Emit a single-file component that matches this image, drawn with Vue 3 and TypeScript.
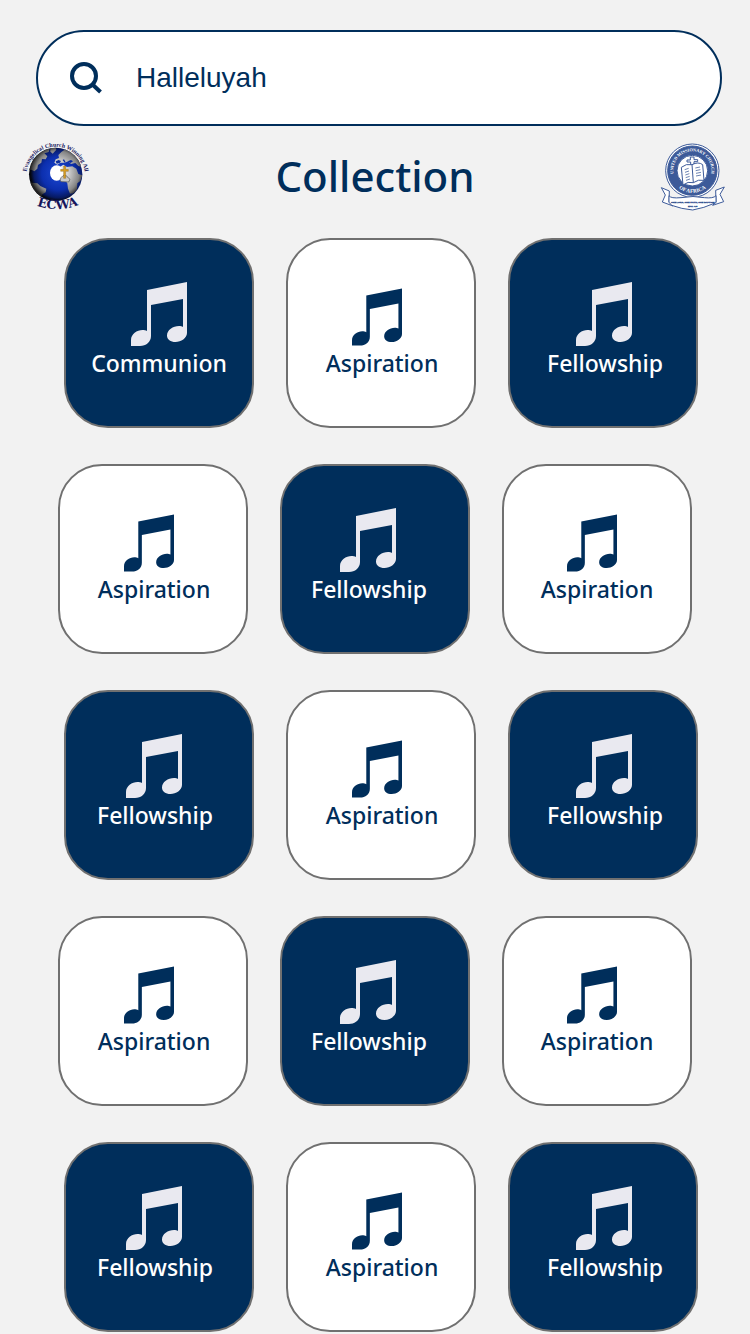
<script setup lang="ts">
import { ref } from 'vue'

interface Tile {
  name: string
  dark: boolean
}

const query = ref('Halleluyah')

const dark = (name: string): Tile => ({ name, dark: true })
const light = (name: string): Tile => ({ name, dark: false })

const rows: Tile[][] = [
  [dark('Communion'), light('Aspiration'), dark('Fellowship')],
  [light('Aspiration'), dark('Fellowship'), light('Aspiration')],
  [dark('Fellowship'), light('Aspiration'), dark('Fellowship')],
  [light('Aspiration'), dark('Fellowship'), light('Aspiration')],
  [dark('Fellowship'), light('Aspiration'), dark('Fellowship')],
]
</script>

<template>
  <main class="page">
    <form class="search" role="search" @submit.prevent>
      <label class="search-label" for="song-search" aria-label="Search">
        <svg class="search-icon" viewBox="0 0 32 32" aria-hidden="true">
          <circle cx="14" cy="14" r="12" fill="none" stroke="currentColor" stroke-width="4" />
          <path d="M22.500 22.500L30.500 30" stroke="currentColor" stroke-width="4" />
        </svg>
      </label>
      <input id="song-search" v-model="query" class="search-input" type="text" />
    </form>

    <header class="header">
      <svg class="logo" viewBox="36 30 204 216" role="img">
        <defs>
          <radialGradient id="sea" cx="0.55" cy="0.48" r="0.52">
            <stop offset="0" stop-color="#1c48d4" />
            <stop offset="0.6" stop-color="#0c2fae" />
            <stop offset="0.88" stop-color="#071a62" />
            <stop offset="1" stop-color="#05070f" />
          </radialGradient>
          <radialGradient id="land" gradientUnits="userSpaceOnUse" cx="142" cy="128" r="82">
            <stop offset="0" stop-color="#ffffff" />
            <stop offset="0.35" stop-color="#dcdcdc" />
            <stop offset="0.8" stop-color="#858585" />
            <stop offset="1" stop-color="#222222" />
          </radialGradient>
          <clipPath id="globe"><circle cx="137" cy="133" r="80" /></clipPath>
          <path id="ecwa-top" d="M49 138A88 88 0 1 1 225 138" />
          <path id="ecwa-base" d="M64 220Q144 256 222 218" />
        </defs>
        <circle cx="137" cy="133" r="80" fill="url(#sea)" />
        <g clip-path="url(#globe)" fill="url(#land)">
          <path d="M54 120L60 92L76 68L98 55L119 55L116 66L103 70L112 79L107 88L96 87L94 98L84 105L82 116L73 124L64 119Z" />
          <path d="M54 153L66 158L82 160L91 168L109 176L107 187L97 193L91 207L79 212L53 185Z" />
          <path d="M121 55L136 51L139 59L128 71L121 65Z" />
          <path d="M133 98L137 88L147 84L145 75L154 66L167 57L189 65L209 91L218 111L205 108L196 99L183 102L175 94L164 98L151 98L142 104Z" />
          <path d="M148 112L160 104L171 111L187 109L199 116L205 132L217 136L211 153L202 160L201 178L190 190L180 191L174 176L172 160L164 150L148 148Z" />
          <ellipse cx="140" cy="129" rx="20" ry="23" fill="#fff" />
        </g>
        <path d="M137 94l9-4 7 3-4 6-9 2zM158 90l6 8 3-1-5-9zM173 94l10-4 6 4-7 5z" fill="#0b2c9d" />
        <path d="M153 143l6-6h10l7 8 4 3-4 8-23-1-3-5z" fill="#c9c9c9" stroke="#4b4b4b" stroke-width="2" />
        <path d="M161 108h6v10h8v6h-8v21h-6v-21h-9v-6h9z" fill="#d79e24" stroke="#76520c" stroke-width="1" />
        <text class="ecwa-arc" text-anchor="middle"><textPath href="#ecwa-top" startOffset="50%">Evangelical Church Winning All</textPath></text>
        <text class="ecwa-name" text-anchor="middle"><textPath href="#ecwa-base" startOffset="50%">ECWA</textPath></text>
      </svg>

      <h1 class="title">Collection</h1>

      <svg class="logo" viewBox="30 17 204 216" role="img">
        <defs>
          <path id="umca-top" d="M73 126A57 57 0 1 1 181 126" />
          <path id="umca-base" d="M75 150A66 66 0 0 0 179 150" />
        </defs>
        <g stroke="#3c5a99" stroke-width="3" stroke-linejoin="round">
          <circle cx="127" cy="109" r="80" fill="#fff" />
          <circle cx="127" cy="109" r="74" fill="#3c5a99" />
          <circle cx="127" cy="109" r="46" fill="#fff" />
          <path d="M34 160L58 170L57 203L69 215L37 203L46 182Z" fill="#fff" />
          <path d="M223 158L197 168L198 203L188 213L221 202L210 180Z" fill="#fff" />
          <path d="M57 184Q62 193 93 190Q130 183 163 190Q190 193 198 184L198 205Q160 222 128 227Q94 224 65 213L57 204Z" fill="#fff" />
          <path d="M121 74V68H132V76H143V82H132V139H122V83H111V77H121Z" fill="#fff" />
          <path d="M94 99Q108 87 126 91Q145 81 158 91L162 138Q145 134 130 145Q114 140 99 152Z" fill="#fff" />
          <path d="M126 91L130 145" fill="none" />
        </g>
        <path d="M104 106l12-4M105 114l12-4M106 122l12-4M107 130l12-4M108 138l12-4M136 101l14-3M137 109l14-3M138 117l15-3M138 125l15-3" stroke="#6d84b2" stroke-width="3" />
        <text class="umca-ring" text-anchor="middle"><textPath href="#umca-top" startOffset="50%">UNITED MISSIONARY CHURCH</textPath></text>
        <text class="umca-ring umca-africa" text-anchor="middle"><textPath href="#umca-base" startOffset="50%">OF AFRICA</textPath></text>
        <text class="umca-motto" x="128" y="207" text-anchor="middle">ONE LORD, ONE FAITH, ONE BAPTISM</text>
        <text class="umca-motto" x="128" y="219" text-anchor="middle">EPH. 4:5</text>
      </svg>
    </header>

    <nav class="collection" aria-label="Collection">
      <div v-for="(row, r) in rows" :key="r" class="row">
        <button
          v-for="(tile, c) in row"
          :key="c"
          type="button"
          class="tile"
          :class="[tile.dark ? 'dark' : 'light', tile.name.toLowerCase()]"
        >
          <svg class="note" viewBox="0 0 56 64" aria-hidden="true">
            <path
              fill="currentColor"
              d="M16 8L56 0V51C56 56 50 60 44.500 60C39.500 60 36 57.500 36 53.500C36 48 42 44 48 44C49.500 44 51 44.300 52 45V17L20 23V54C20 60 15 64 9 64H0V58C0 52 6 48 11.500 48C13 48 15 48.300 16 49Z"
            />
          </svg>
          <span class="name">{{ tile.name }}</span>
        </button>
      </div>
    </nav>
  </main>
</template>

<style>
body {
  background: #f2f2f2;
}
</style>

<style scoped>
.page {
  box-sizing: border-box;
  height: 100vh;
  overflow: hidden;
  padding-top: 30px;
  background: #f2f2f2;
  color: #002e5b;
  font-family: "Noto Sans", "Open Sans", sans-serif;
}

.search {
  display: flex;
  align-items: center;
  gap: 34px;
  box-sizing: border-box;
  height: 96px;
  margin: 0 28px 0 36px;
  padding: 0 32px;
  border: 2px solid #002e5b;
  border-radius: 48px;
  background: #fff;
}

.search-label,
.search-icon {
  display: block;
  width: 32px;
  height: 32px;
  flex: none;
}

.search-input {
  flex: 1;
  min-width: 0;
  padding: 0;
  border: 0;
  outline: 0;
  background: none;
  color: inherit;
  font: 28px "Liberation Sans", Arial, sans-serif;
}

.header {
  display: flex;
  align-items: center;
  justify-content: space-between;
  padding: 14px 22px 0;
  height: 72px;
}

.logo {
  width: 68px;
  height: 72px;
  overflow: visible;
}

.title {
  margin: 0;
  font-size: 42px;
  font-weight: 500;
  line-height: 60px;
}

.ecwa-arc {
  fill: #1b1b60;
  font: bold 18px "Liberation Serif", serif;
}

.ecwa-name {
  fill: #16165c;
  font: bold 38px "DejaVu Serif", serif;
}

.umca-ring {
  fill: #fff;
  font: bold 13px "Liberation Serif", serif;
}

.umca-africa {
  font-size: 16px;
}

.umca-motto {
  fill: #30508f;
  stroke: #30508f;
  stroke-width: 1px;
  font: bold 7px "Liberation Sans", sans-serif;
}

.collection {
  display: flex;
  flex-direction: column;
  gap: 36px;
  padding: 26px 0 0;
}

.row {
  display: grid;
  grid-template-columns: repeat(3, 1fr);
  gap: 32px;
  margin: 0 52px 0 64px;
}

.row:nth-child(even) {
  margin: 0 58px;
}

.tile {
  display: flex;
  flex-direction: column;
  align-items: center;
  justify-content: flex-end;
  box-sizing: border-box;
  aspect-ratio: 1;
  padding: 0 0 46px;
  border: 2px solid #707070;
  border-radius: 44px;
  font: inherit;
  cursor: pointer;
}

.dark {
  background: #002e5b;
  color: #fff;
}

.light {
  padding-left: 2px;
  background: #fff;
  color: #002e5b;
}

.light:last-child {
  padding-left: 0;
}

.fellowship {
  padding-right: 8px;
}

.row:nth-child(even) .fellowship {
  padding-right: 12px;
}

.fellowship:last-child {
  padding-right: 0;
  padding-left: 4px;
}

.note {
  width: 56px;
  height: 64px;
}

.dark .note {
  color: #e9e9f0;
}

.fellowship .note {
  margin-right: 2px;
}

.light .note {
  width: 50px;
  height: 58px;
  margin-right: 10px;
}

.name {
  font-size: 23px;
  font-weight: 500;
  line-height: 34px;
}
</style>
